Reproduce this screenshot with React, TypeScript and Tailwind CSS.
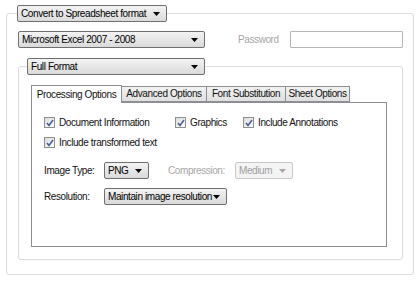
import React from "react";

function Arrow({ disabled = false }: { disabled?: boolean }) {
  return (
    <svg width="7" height="4" viewBox="0 0 7 4" className="shrink-0">
      <path d="M0 0 H7 L3.5 4 Z" fill={disabled ? "#a8a8a8" : "#000"} />
    </svg>
  );
}

function Select({
  label,
  className = "",
  disabled = false,
}: {
  label: string;
  className?: string;
  disabled?: boolean;
}) {
  return (
    <div
      className={
        "flex h-[17px] items-center justify-between whitespace-nowrap rounded-[2px] border pl-[3px] pr-[6px] " +
        (disabled
          ? "border-[#c9c9c9] bg-[#f4f4f4] text-[#a0a0a0] "
          : "border-[#6f6f6f] bg-gradient-to-b from-[#f3f3f3] to-[#dadada] text-black ") +
        className
      }
    >
      <span className="leading-none">{label}</span>
      <Arrow disabled={disabled} />
    </div>
  );
}

function Check({ label }: { label: string }) {
  return (
    <div className="flex items-center gap-[4px] whitespace-nowrap">
      <div className="flex h-[11px] w-[11px] items-center justify-center border border-[#8e8f8f] bg-gradient-to-br from-[#dcdcdc] to-[#ffffff]">
        <svg width="8" height="8" viewBox="0 0 8 8">
          <path d="M1 4 L3 6.5 L7 1" fill="none" stroke="#4a5f97" strokeWidth="1.6" />
        </svg>
      </div>
      <span className="leading-none">{label}</span>
    </div>
  );
}

function Tab({
  label,
  active = false,
  className = "",
}: {
  label: string;
  active?: boolean;
  className?: string;
}) {
  return (
    <div
      className={
        "flex items-center justify-center whitespace-nowrap border border-[#8c8e94] leading-none " +
        (active
          ? "relative z-10 -mb-px h-[18px] border-b-0 bg-white "
          : "-ml-px h-[16px] bg-gradient-to-b from-[#f2f2f2] to-[#e0e0e0] ") +
        className
      }
    >
      {label}
    </div>
  );
}

export default function App() {
  return (
    <div
      className="h-[281px] w-[420px] bg-white pl-[6px] pr-[6px] pt-[5px] text-[10px] tracking-[-0.4px] text-[#111]"
      style={{ fontFamily: "'Liberation Sans', Arial, sans-serif" }}
    >
      <fieldset className="h-[270px] rounded-[3px] border border-[#d9dddd] pl-[11px] pr-[10px]">
        <legend className="-ml-[1px]">
          <Select label="Convert to Spreadsheet format" className="w-[150px]" />
        </legend>
        <div className="mt-[9px] flex items-center">
          <Select label="Microsoft Excel 2007 - 2008" className="w-[187px]" />
          <span className="ml-[33px] text-[#a6a6a6]">Password</span>
          <div className="ml-[11px] h-[17px] w-[113px] rounded-[1px] border border-[#b6b6b6] bg-white" />
        </div>
        <fieldset className="mt-[10px] h-[202px] rounded-[3px] border border-[#d9dddd] pl-[12px] pr-[15px]">
          <legend className="ml-[-4px]">
            <Select label="Full Format" className="w-[178px]" />
          </legend>
          <div className="mt-[10px] flex items-end">
            <Tab label="Processing Options" active className="w-[91px]" />
            <Tab label="Advanced Options" className="w-[86px]" />
            <Tab label="Font Substitution" className="w-[80px]" />
            <Tab label="Sheet Options" className="w-[65px]" />
          </div>
          <div className="h-[145px] border border-[#8c8e94] bg-white pl-[12px] pt-[14px]">
            <div className="flex items-center">
              <div className="w-[131px]">
                <Check label="Document Information" />
              </div>
              <div className="w-[68px]">
                <Check label="Graphics" />
              </div>
              <Check label="Include Annotations" />
            </div>
            <div className="mt-[9px]">
              <Check label="Include transformed text" />
            </div>
            <div className="mt-[14px] flex items-center">
              <span className="w-[60px]">Image Type:</span>
              <Select label="PNG" className="w-[45px]" />
              <span className="ml-[19px] w-[67px] text-[#a6a6a6]">Compression:</span>
              <Select label="Medium" className="w-[58px]" disabled />
            </div>
            <div className="mt-[9px] flex items-center">
              <span className="w-[60px]">Resolution:</span>
              <Select label="Maintain image resolution" className="w-[123px]" />
            </div>
          </div>
        </fieldset>
      </fieldset>
    </div>
  );
}
